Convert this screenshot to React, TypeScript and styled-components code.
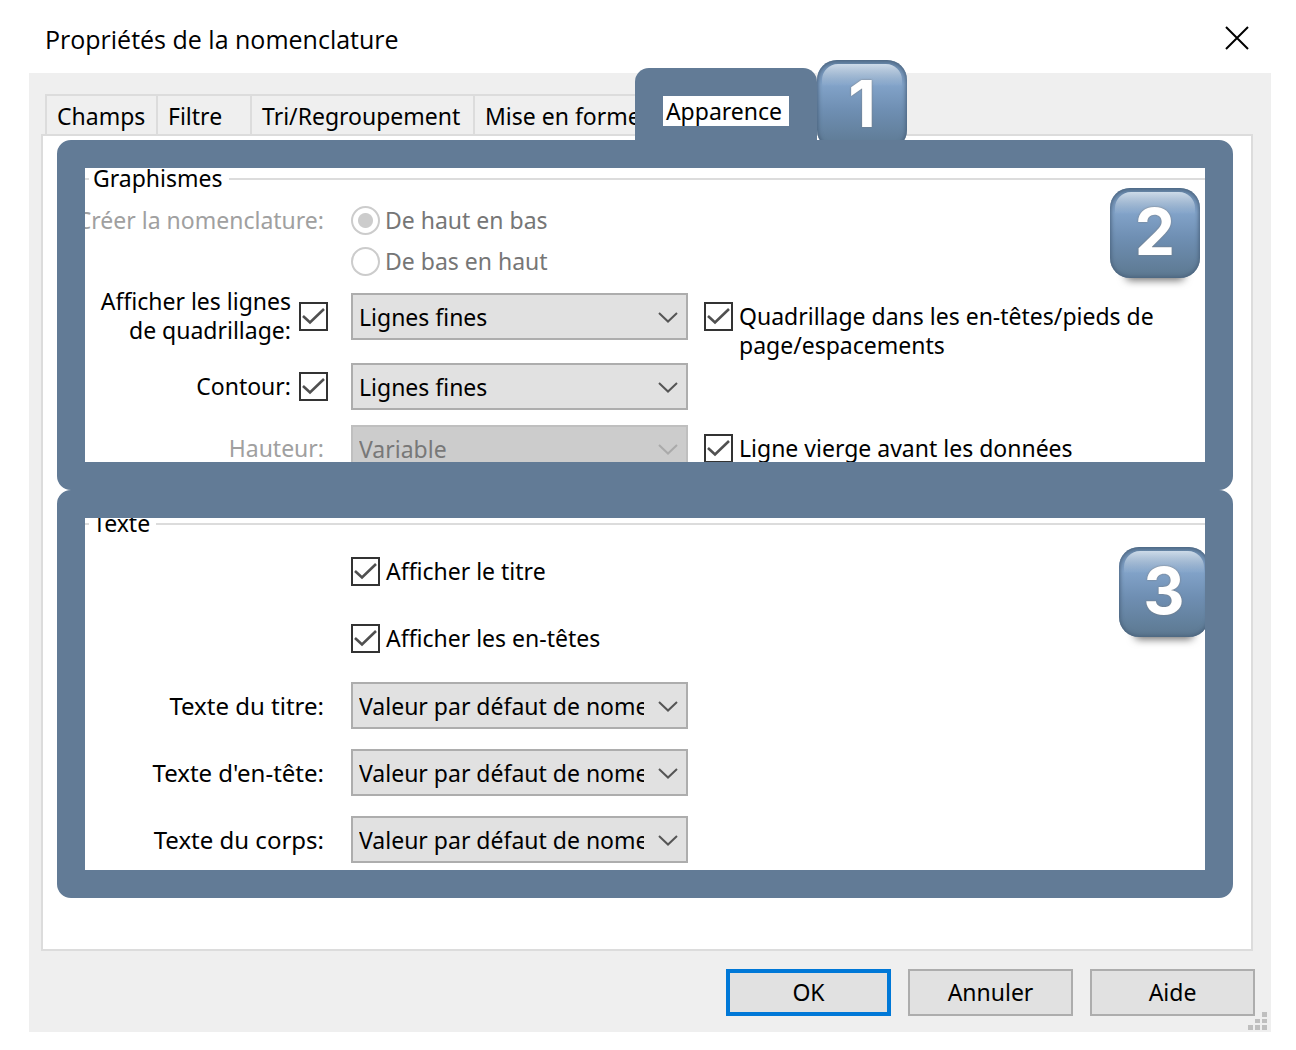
import React from "react";
import styled, { createGlobalStyle, css } from "styled-components";

const slate = "#627b96";
const line = "#dcdcdc";
const face = "#efefef";

const GlobalStyle = createGlobalStyle`
  *, *::before, *::after { box-sizing: border-box; }
  body {
    margin: 0;
    background: #fff;
    color: #000;
    font: 23px/29px "Noto Sans", "Open Sans", sans-serif;
  }
  button, select, input { font: inherit; color: inherit; margin: 0; }
`;

const Dialog = styled.main`
  padding: 0 25px 18px 29px;
`;

const TitleBar = styled.header`
  display: flex;
  align-items: center;
  justify-content: space-between;
  height: 73px;
  padding: 4px 20px 0 16px;
`;

const Title = styled.h1`
  margin: 0;
  font: 400 25px/34px "Open Sans", "Noto Sans", sans-serif;
`;

const CloseButton = styled.button`
  display: flex;
  padding: 0 0 2px;
  border: 0;
  background: none;
`;

const Body = styled.div`
  position: relative;
  padding: 21px 16px 16px 12px;
  background: ${face};
`;

const Tabs = styled.div`
  position: relative;
  display: flex;
  height: 40px;
  padding-left: 4px;
`;

const Tab = styled.button<{ $width: number }>`
  flex: none;
  width: ${(p) => p.$width}px;
  padding: 3px 0 0 10px;
  border: solid ${line};
  border-width: 2px 0 0 2px;
  background: ${face};
  text-align: left;
  white-space: nowrap;
`;

const ActiveTab = styled.button`
  position: relative;
  flex: none;
  align-self: flex-end;
  height: 72px;
  margin-bottom: -6px;
  padding: 28px 28px 14px;
  border: 0;
  border-radius: 14px 14px 0 0;
  background: ${slate};

  span {
    display: block;
    width: 126px;
    height: 30px;
    padding-right: 4px;
    background: #fff;
    line-height: 30px;
  }
`;

const Panel = styled.div`
  margin-right: 2px;
  padding: 4px 18px 51px 14px;
  border: 2px solid ${line};
  background: #fff;
`;

const Frame = styled.section`
  position: relative;
  display: flow-root;
  border: 28px solid ${slate};
  border-radius: 14px;
  overflow: hidden;
`;

const Group = styled.fieldset<{ $cutTop: number; $cutBottom: number; $head: number }>`
  min-width: 0;
  margin: -${(p) => p.$cutTop}px 0 -${(p) => p.$cutBottom}px;
  padding: ${(p) => p.$head}px 0 0;
  border: 0 solid ${line};
  border-top-width: 2px;
`;

const Legend = styled.legend`
  margin-left: 4px;
  padding: 0 6px 0 4px;
`;

const Rows = styled.div<{ $rows: string }>`
  display: grid;
  grid-template-columns: 243px 23px 337px 16px 1fr;
  grid-template-rows: ${(p) => p.$rows};
  align-items: center;
`;

const Slot = styled.div<{ $area: "label" | "field" | "extra"; $row: number; $drop?: boolean }>`
  grid-column: ${(p) => ({ label: 1, field: 3, extra: 5 })[p.$area]};
  grid-row: ${(p) => p.$row};
  display: flex;
  min-width: 0;
  justify-content: ${(p) => (p.$area === "label" ? "flex-end" : "flex-start")};
  text-align: ${(p) => (p.$area === "label" ? "right" : "left")};
  ${(p) => p.$drop && css`align-self: start; padding-top: 20px; height: 66px;`}
`;

const Caption = styled.label<{ $muted?: boolean }>`
  padding-right: 4px;
  white-space: nowrap;
  font-size: ${(p) => (p.$muted ? 23 : 24)}px;
  color: ${(p) => (p.$muted ? "#a0a0a0" : "#000")};
`;

const Choice = styled.label<{ $gap: number; $muted?: boolean; $center?: boolean }>`
  display: flex;
  align-items: ${(p) => (p.$center ? "center" : "flex-start")};
  gap: ${(p) => p.$gap}px;
  white-space: nowrap;
  color: ${(p) => (p.$muted ? "#767676" : "#000")};
`;

const MarkBox = styled.span`
  flex: none;
  display: grid;
  width: 29px;
  height: 29px;

  > * { grid-area: 1 / 1; }
  svg { pointer-events: none; }
`;

const CheckInput = styled.input`
  appearance: none;
  width: 29px;
  height: 29px;
  border: 2px solid #333;
  background: #fff;
`;

const RadioInput = styled.input`
  appearance: none;
  flex: none;
  width: 29px;
  height: 29px;
  border: 2px solid #ccc;
  border-radius: 50%;
  background: #fff;

  &:checked { background: radial-gradient(circle, #ccc 7px, #fff 8px); }
`;

const SelectWrap = styled.div`
  position: relative;
  width: 100%;

  svg {
    position: absolute;
    right: 10px;
    top: 19px;
    pointer-events: none;
  }
`;

const SelectInput = styled.select`
  appearance: none;
  display: block;
  width: 100%;
  height: 47px;
  padding: 2px 42px 0 6px;
  border: 2px solid #adadad;
  border-radius: 0;
  background: #e1e1e1;
  text-overflow: clip;

  &:disabled {
    border-color: #bfbfbf;
    background: #ccc;
    color: #787878;
    opacity: 1;
  }
`;

const Footer = styled.footer`
  display: flex;
  justify-content: flex-end;
  gap: 17px;
  padding-top: 18px;
`;

const PushButton = styled.button<{ $primary?: boolean }>`
  width: 165px;
  height: 47px;
  padding: 0;
  border: ${(p) => (p.$primary ? "4px solid #0078d7" : "2px solid #adadad")};
  background: #e1e1e1;
`;

const Grip = styled.svg`
  position: absolute;
  right: 4px;
  bottom: 2px;
`;

const Keycap = styled.b<{ $x: string; $y: number }>`
  position: absolute;
  ${(p) => p.$x};
  top: ${(p) => p.$y}px;
  width: 90px;
  height: 90px;
  border-radius: 20px;
  background: linear-gradient(#5f7f9f 0, #7090b4 8%, #82a3c9 27%, #6f8fb3 55%, #5c7890 100%);
  box-shadow: inset 0 0 4px 1px #48607a, 0 18px 8px -16px rgba(0, 0, 0, 0.6);
  color: #fff;
  font: 700 64px/88px Inter, "Liberation Sans", sans-serif;
  text-align: center;
  text-shadow: 0 0 2px #777;

  &::before {
    content: "";
    position: absolute;
    inset: 4px 5px auto;
    height: 22px;
    border-radius: 16px 16px 0 0;
    background: linear-gradient(#cddbe9, rgba(130, 163, 201, 0));
  }
  span { position: relative; }
`;

const Chevron = ({ color }: { color: string }) => (
  <svg width="20" height="12" viewBox="0 0 20 12" fill="none" stroke={color} strokeWidth="2">
    <path d="M1 1l9 8.5L19 1" />
  </svg>
);

const Check = ({ id }: { id: string }) => (
  <MarkBox>
    <CheckInput type="checkbox" id={id} defaultChecked />
    <svg width="29" height="29" viewBox="0 0 29 29" fill="none" stroke="#505050" strokeWidth="2.6">
      <path d="M4 14l7 6.5L25 7" />
    </svg>
  </MarkBox>
);

type DropdownProps = { id: string; value: string; label?: string; disabled?: boolean };

const Dropdown = ({ id, value, label, disabled }: DropdownProps) => (
  <SelectWrap>
    <SelectInput id={id} aria-label={label} disabled={disabled}>
      <option>{value}</option>
    </SelectInput>
    <Chevron color={disabled ? "#aaa" : "#555"} />
  </SelectWrap>
);

const textRows = [
  { id: "titre", label: "Texte du titre:" },
  { id: "entete", label: "Texte d'en-tête:" },
  { id: "corps", label: "Texte du corps:" },
];

export default function App() {
  return (
    <Dialog>
      <GlobalStyle />
      <TitleBar>
        <Title>Propriétés de la nomenclature</Title>
        <CloseButton aria-label="Fermer">
          <svg width="28" height="24" viewBox="0 0 28 24" stroke="#000" strokeWidth="2">
            <path d="M3 1l22 22M25 1L3 23" />
          </svg>
        </CloseButton>
      </TitleBar>
      <Body>
        <Tabs role="tablist">
          <Tab role="tab" $width={111}>Champs</Tab>
          <Tab role="tab" $width={94}>Filtre</Tab>
          <Tab role="tab" $width={223}>Tri/Regroupement</Tab>
          <Tab role="tab" $width={162}>Mise en forme</Tab>
          <ActiveTab role="tab" aria-selected="true">
            <span>Apparence</span>
          </ActiveTab>
          <Keycap $x="left: 776px" $y={-34}><span>1</span></Keycap>
        </Tabs>
        <Panel>
          <Frame>
            <Group $cutTop={4} $cutBottom={12} $head={7}>
              <Legend>Graphismes</Legend>
              <Rows $rows="41px 41px 68px 72px 52px">
                <Slot $area="label" $row={1}>
                  <Caption as="span" $muted>Créer la nomenclature:</Caption>
                </Slot>
                <Slot $area="field" $row={1}>
                  <Choice $gap={5} $muted>
                    <RadioInput type="radio" name="sens" defaultChecked disabled />
                    De haut en bas
                  </Choice>
                </Slot>
                <Slot $area="field" $row={2}>
                  <Choice $gap={5} $muted>
                    <RadioInput type="radio" name="sens" disabled />
                    De bas en haut
                  </Choice>
                </Slot>
                <Slot $area="label" $row={3}>
                  <Choice $gap={8} $center htmlFor="quadrillage">
                    <span>Afficher les lignes<br />de quadrillage:</span>
                    <Check id="quadrillage" />
                  </Choice>
                </Slot>
                <Slot $area="field" $row={3}>
                  <Dropdown id="style-quadrillage" label="Style du quadrillage" value="Lignes fines" />
                </Slot>
                <Slot $area="extra" $row={3} $drop>
                  <Choice $gap={6} htmlFor="entetes-pieds">
                    <Check id="entetes-pieds" />
                    <span>Quadrillage dans les en-têtes/pieds de<br />page/espacements</span>
                  </Choice>
                </Slot>
                <Slot $area="label" $row={4}>
                  <Choice $gap={8} $center htmlFor="contour">
                    Contour:
                    <Check id="contour" />
                  </Choice>
                </Slot>
                <Slot $area="field" $row={4}>
                  <Dropdown id="style-contour" label="Style du contour" value="Lignes fines" />
                </Slot>
                <Slot $area="label" $row={5}>
                  <Caption htmlFor="hauteur" $muted>Hauteur:</Caption>
                </Slot>
                <Slot $area="field" $row={5}>
                  <Dropdown id="hauteur" value="Variable" disabled />
                </Slot>
                <Slot $area="extra" $row={5}>
                  <Choice $gap={6} htmlFor="ligne-vierge">
                    <Check id="ligne-vierge" />
                    Ligne vierge avant les données
                  </Choice>
                </Slot>
              </Rows>
            </Group>
            <Keycap $x="right: 5px" $y={20}><span>2</span></Keycap>
          </Frame>
          <Frame>
            <Group $cutTop={9} $cutBottom={3} $head={0}>
              <Legend>Texte</Legend>
              <Rows $rows="repeat(5, 67px)">
                <Slot $area="field" $row={1}>
                  <Choice $gap={6} htmlFor="afficher-titre">
                    <Check id="afficher-titre" />
                    Afficher le titre
                  </Choice>
                </Slot>
                <Slot $area="field" $row={2}>
                  <Choice $gap={6} htmlFor="afficher-entetes">
                    <Check id="afficher-entetes" />
                    Afficher les en-têtes
                  </Choice>
                </Slot>
                {textRows.map((row, i) => (
                  <React.Fragment key={row.id}>
                    <Slot $area="label" $row={i + 3}>
                      <Caption htmlFor={row.id}>{row.label}</Caption>
                    </Slot>
                    <Slot $area="field" $row={i + 3}>
                      <Dropdown id={row.id} value="Valeur par défaut de nomenclature" />
                    </Slot>
                  </React.Fragment>
                ))}
              </Rows>
            </Group>
            <Keycap $x="right: -4px" $y={29}><span>3</span></Keycap>
          </Frame>
        </Panel>
        <Footer>
          <PushButton $primary>OK</PushButton>
          <PushButton>Annuler</PushButton>
          <PushButton>Aide</PushButton>
        </Footer>
        <Grip width="19" height="18" viewBox="0 0 19 18" fill="#bfbfbf">
          <path d="M14 0h5v5h-5zM7 7h5v4H7zM14 7h5v4h-5zM0 13h5v5H0zM7 13h5v5H7zM14 13h5v5h-5z" />
        </Grip>
      </Body>
    </Dialog>
  );
}
